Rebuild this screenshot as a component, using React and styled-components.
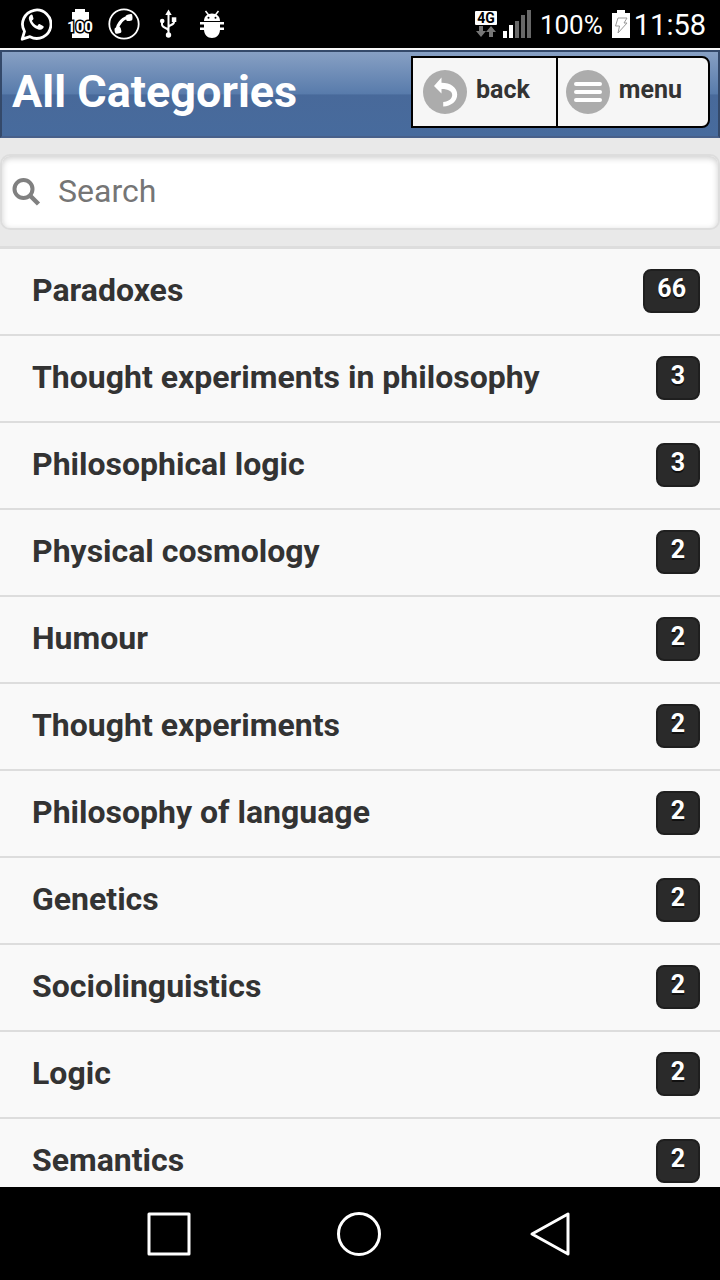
import React from 'react';
import styled, { createGlobalStyle } from 'styled-components';

const GlobalStyle = createGlobalStyle`
  *, *::before, *::after { box-sizing: border-box; }
  body {
    margin: 0;
    background: #000;
    font-family: Roboto, "Liberation Sans", sans-serif;
  }
`;

const Screen = styled.div`
  display: flex;
  flex-direction: column;
  height: 100vh;
  background: #f9f9f9;
`;

const StatusBar = styled.div`
  flex: none;
  display: flex;
  justify-content: space-between;
  align-items: center;
  height: 48px;
  padding: 0 14px 0 20px;
  background: #000;
  color: #fff;
`;

const StatusGroup = styled.div`
  display: flex;
  align-items: center;
  gap: ${({ $gap }) => $gap}px;

  svg { display: block; }
`;

const StatusText = styled.span`
  font-size: ${({ $size }) => $size}px;
  line-height: 32px;
  padding-top: 2px;
`;

const Header = styled.header`
  flex: none;
  display: flex;
  justify-content: space-between;
  align-items: flex-start;
  height: 88px;
  margin-top: 2px;
  padding: 4px 8px 0 10px;
  border: 2px solid #34496a;
  border-bottom-color: #48608a;
  background: linear-gradient(#87a0c4 0%, #587bab 50%, #48699a 51%, #476b9d 100%);
`;

const Title = styled.h1`
  margin: 0;
  font-size: 45px;
  line-height: 72px;
  font-weight: 700;
  color: #fff;
  white-space: nowrap;
`;

const ButtonGroup = styled.div`
  display: flex;
  height: 72px;
  border: 2px solid #000;
  border-radius: 0 8px 8px 0;
  background: #f6f6f6;
  overflow: hidden;
`;

const HeaderButton = styled.button`
  display: flex;
  align-items: center;
  gap: 9px;
  padding: 0 26px 0 ${({ $divided }) => ($divided ? 8 : 10)}px;
  border: 0;
  border-left: ${({ $divided }) => ($divided ? '2px solid #000' : '0')};
  background: transparent;
  font-family: inherit;
  font-size: 25px;
  line-height: 32px;
  font-weight: 700;
  color: #333;

  svg { display: block; }
  span { padding-bottom: 4px; }
`;

const SearchForm = styled.form`
  flex: none;
  padding: 16px 0;
  background: #e9e9e9;
  border-bottom: 1px solid #ddd;
`;

const SearchBox = styled.label`
  display: flex;
  align-items: center;
  gap: 16px;
  height: 76px;
  padding: 0 10px;
  border: 2px solid #ddd;
  border-radius: 10px;
  background: #fff;
  box-shadow: inset 0 2px 6px rgba(0, 0, 0, 0.2);

  svg { flex: none; display: block; }
`;

const SearchInput = styled.input`
  flex: 1;
  min-width: 0;
  padding: 0 0 2px;
  border: 0;
  outline: 0;
  background: transparent;
  font-family: inherit;
  font-size: 32px;
  line-height: 40px;
  color: #333;

  &::placeholder { color: #757575; opacity: 1; }
`;

const List = styled.ul`
  flex: 1;
  min-height: 0;
  margin: 0;
  padding: 0;
  list-style: none;
  overflow-y: auto;
  scrollbar-width: none;
`;

const Row = styled.li`
  border-top: 2px solid #ddd;
`;

const RowLink = styled.a`
  display: flex;
  justify-content: space-between;
  align-items: center;
  height: 85px;
  padding: 0 20px 2px 32px;
  color: #333;
  font-weight: 700;
  text-decoration: none;
`;

const RowName = styled.span`
  padding-bottom: 2px;
  font-size: 32px;
  line-height: 40px;
`;

const Count = styled.span`
  min-width: 44px;
  height: 44px;
  padding: 0 12px;
  border: 2px solid #1f1f1f;
  border-radius: 8px;
  background: #2a2a2a;
  color: #fff;
  font-size: 25px;
  line-height: 36px;
  text-align: center;
  text-shadow: 0 2px 0 #111;
`;

const NavBar = styled.nav`
  flex: none;
  display: flex;
  justify-content: center;
  align-items: center;
  gap: 142px;
  height: 93px;
  padding-right: 2px;
  background: #000;
`;

const NavButton = styled.button`
  padding: 0;
  border: 0;
  background: transparent;

  svg { display: block; }
`;

const categories = [
  ['Paradoxes', 66],
  ['Thought experiments in philosophy', 3],
  ['Philosophical logic', 3],
  ['Physical cosmology', 2],
  ['Humour', 2],
  ['Thought experiments', 2],
  ['Philosophy of language', 2],
  ['Genetics', 2],
  ['Sociolinguistics', 2],
  ['Logic', 2],
  ['Semantics', 2],
];

const HANDSET =
  'M7.6 3.4c-.8.3-3.4 2.2-2.6 5.6 1.400 5.500 5.600 9.800 11 11.200 3.200.8 5-1.600 5.300-2.600.2-.7-.1-1.300-.6-1.600l-3.600-1.900c-.6-.3-1.200-.2-1.600.3l-1.300 1.600c-2.900-1.100-4.900-3.100-6-5.600l1.400-1.500c.4-.4.500-.9.300-1.400L8.900 3.900c-.2-.5-.8-.7-1.300-.5z';

const WhatsAppIcon = () => (
  <svg width="32" height="36" viewBox="0 0 32 36" fill="none">
    <path d="M2.200 33.200l2.300-7.800A14.200 14.200 0 1 1 10 30.700z" stroke="#fff" strokeWidth="2.800" strokeLinejoin="round" />
    <path transform="translate(4.500 5.500) scale(.9)" d={HANDSET} fill="#fff" />
  </svg>
);

const BatteryLevelIcon = () => (
  <svg width="28" height="32" viewBox="0 0 28 32">
    <path d="M9 1h10v3h4v26H6V4h3z" fill="#fff" />
    <text
      x="14" y="24" textAnchor="middle" fontSize="15" fontWeight="700" fontFamily="Roboto, sans-serif"
      fill="#fff" stroke="#000" strokeWidth="3" paintOrder="stroke"
    >
      100
    </text>
  </svg>
);

const PhoneIcon = () => (
  <svg width="32" height="32" viewBox="0 0 32 32" fill="none">
    <circle cx="16" cy="16" r="14.700" stroke="#fff" strokeWidth="1.800" />
    <path d="M9 22.500C9.500 15.500 15.500 9 22 9" stroke="#fff" strokeWidth="3" />
    <path d="M18 7.500c1-.8 4.500-2 5.600-1.500 1 .5 1.200 5.500.4 6.300-.8.700-4.500 1.200-5.300.4-.7-.8-1.300-4.600-.7-5.200z" fill="#fff" />
    <path d="M6.800 20.200c.8-.9 4.800-1.600 5.500-.8.700.9 1.500 4.400.8 5.200-.9.900-4.600 1.500-5.500.8-.9-.8-1.500-4.300-.8-5.200z" fill="#fff" />
  </svg>
);

const UsbIcon = () => (
  <svg width="28" height="32" viewBox="0 0 28 32" fill="none">
    <path d="M14.500 6v20M14.500 23c0-3.500-6.500-2.500-6.500-6.500V13M14.500 19.500c0-3 5.500-2 5.500-5.500v-2" stroke="#fff" strokeWidth="2" />
    <path d="M14.500 1.500l3.200 5.500h-6.400z" fill="#fff" />
    <circle cx="14.500" cy="27" r="2.700" fill="#fff" />
    <circle cx="8.200" cy="13" r="2.300" fill="#fff" />
    <path d="M17.800 9.300h4.500v4.700h-4.500z" fill="#fff" />
  </svg>
);

const BugIcon = () => (
  <svg width="32" height="32" viewBox="0 0 32 32">
    <path d="M9.500 3l3.500 4.500M22.500 3l-3.500 4.500" stroke="#fff" strokeWidth="1.500" />
    <path d="M8 13c0-4.800 3.600-7.500 8-7.500s8 2.700 8 7.500z" fill="#fff" />
    <circle cx="12.500" cy="9.800" r="1" /><circle cx="19.500" cy="9.800" r="1" />
    <path d="M4 14h24v2.500H4zM4 19.500h24V22H4zM8 14h16v7.500c0 5-3.600 8.500-8 8.500s-8-3.500-8-8.500z" fill="#fff" />
  </svg>
);

const FourGIcon = () => (
  <svg width="22" height="28" viewBox="0 0 22 28">
    <rect y="1" width="22" height="14" rx="1" fill="#fff" />
    <text x="11" y="13" textAnchor="middle" fontSize="14" fontWeight="700" fontFamily="Roboto, sans-serif" fill="#000">4G</text>
    <path d="M4 16h4v5h3l-5 6-5-6h3zM14 27h4v-5h3l-5-6-5 6h3z" fill="#777" />
  </svg>
);

const SignalIcon = () => (
  <svg width="28" height="28" viewBox="0 0 28 28">
    <path d="M0 21h4v7H0zM6 15h4v13H6z" fill="#fff" />
    <path d="M12 11h4v17h-4zM18 5h4v23h-4zM24 0h4v28h-4z" fill="#686868" />
  </svg>
);

const ChargingIcon = () => (
  <svg width="18" height="28" viewBox="0 0 18 28">
    <path d="M5 0h8v3h5v25H0V3h5z" fill="#fff" />
    <path d="M6 8h9l-3 5h3L6 23l1.500-7H3.500z" fill="none" stroke="#999" strokeWidth="1" />
  </svg>
);

const BackIcon = () => (
  <svg width="44" height="44" viewBox="0 0 44 44">
    <circle cx="22" cy="22" r="22" fill="#acacac" />
    <path d="M11 16l7.500-8.500v5.300c9 0 15.700 4.700 15.700 11.700 0 7-6 11.500-14 12v-4.500c5.500-.7 9-3.200 9-7 0-3.700-3.500-6.100-10.700-6.100v4.600z" fill="#fff" />
  </svg>
);

const MenuIcon = () => (
  <svg width="44" height="44" viewBox="0 0 44 44">
    <circle cx="22" cy="22" r="22" fill="#acacac" />
    <path d="M10 14h24M10 22h24M10 30h24" stroke="#fff" strokeWidth="4" strokeLinecap="round" />
  </svg>
);

const SearchIcon = () => (
  <svg width="30" height="30" viewBox="0 0 30 30" fill="none" stroke="#808080">
    <circle cx="11.500" cy="12" r="9" strokeWidth="4" />
    <path d="M18 18.500l8.500 8.500" strokeWidth="4.500" />
  </svg>
);

const NavShape = ({ children }) => (
  <svg width="48" height="48" viewBox="0 0 48 48" fill="none" stroke="#fff" strokeWidth="3" strokeLinejoin="round">
    {children}
  </svg>
);

export default function App() {
  return (
    <Screen>
      <GlobalStyle />
      <StatusBar>
        <StatusGroup $gap={14}>
          <WhatsAppIcon />
          <BatteryLevelIcon />
          <PhoneIcon />
          <UsbIcon />
          <BugIcon />
        </StatusGroup>
        <StatusGroup $gap={9}>
          <StatusGroup $gap={6}>
            <FourGIcon />
            <SignalIcon />
          </StatusGroup>
          <StatusText $size={26}>100%</StatusText>
          <StatusGroup $gap={4}>
            <ChargingIcon />
            <StatusText $size={29}>11:58</StatusText>
          </StatusGroup>
        </StatusGroup>
      </StatusBar>
      <Header>
        <Title>All Categories</Title>
        <ButtonGroup>
          <HeaderButton type="button">
            <BackIcon />
            <span>back</span>
          </HeaderButton>
          <HeaderButton type="button" $divided>
            <MenuIcon />
            <span>menu</span>
          </HeaderButton>
        </ButtonGroup>
      </Header>
      <SearchForm role="search" onSubmit={(e) => e.preventDefault()}>
        <SearchBox>
          <SearchIcon />
          <SearchInput type="text" placeholder="Search" aria-label="Search" />
        </SearchBox>
      </SearchForm>
      <List>
        {categories.map(([name, count]) => (
          <Row key={name}>
            <RowLink href="#">
              <RowName>{name}</RowName>
              <Count>{count}</Count>
            </RowLink>
          </Row>
        ))}
      </List>
      <NavBar>
        <NavButton type="button" aria-label="Recent apps">
          <NavShape><path d="M4 4h40v40H4z" /></NavShape>
        </NavButton>
        <NavButton type="button" aria-label="Home">
          <NavShape><circle cx="24" cy="24" r="20.500" /></NavShape>
        </NavButton>
        <NavButton type="button" aria-label="Back">
          <NavShape><path d="M43 4v40L7 24z" /></NavShape>
        </NavButton>
      </NavBar>
    </Screen>
  );
}
